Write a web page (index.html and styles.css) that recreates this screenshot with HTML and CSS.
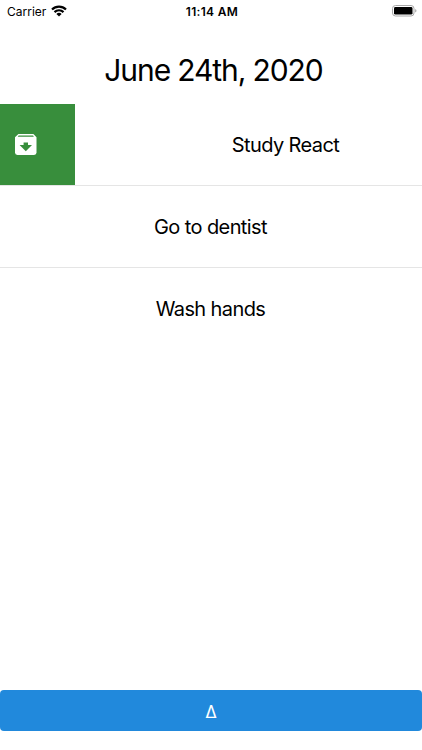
FILE: index.html
```html
<!DOCTYPE html>
<html lang="en">
<head>
    <meta charset="UTF-8">
    <title>Todo</title>
    <link rel="stylesheet" href="styles.css">
</head>
<body>
    <div class="status-bar">
        <div class="carrier">
            <span>Carrier</span>
            <svg width="16" height="12" viewBox="0 0 16 12">
                <path d="M1 4.5a10 10 0 0 1 14 0M3.5 7.1a6.4 6.4 0 0 1 9 0" fill="none" stroke="#000" stroke-width="2.2"/>
                <path d="M8 11.6L5.4 9a3.8 3.8 0 0 1 5.2 0z"/>
            </svg>
        </div>
        <div class="time">11:14 AM</div>
        <div class="battery">
            <svg width="25" height="12" viewBox="0 0 25 12">
                <rect x="0.5" y="0.5" width="21.5" height="10.5" rx="3" fill="none" stroke="#a8a8a8"/>
                <rect x="2" y="2" width="18.5" height="7.6" rx="1.4"/>
                <path d="M23.4 4a2 2 0 0 1 0 3.4z" fill="#888"/>
            </svg>
        </div>
    </div>

    <h1 class="date">June 24th, 2020</h1>

    <ul class="todos">
        <li class="todo swiped">
            <div class="archive">
                <svg width="22" height="21" viewBox="0 0 22 21">
                    <path d="M3.4 0h15L21.5 3.2V18.6a2.4 2.4 0 0 1-2.4 2.4H2.4A2.4 2.4 0 0 1 0 18.6V3.2z" fill="#fff"/>
                    <path d="M3.6 1.5h14.4l0.9 1.2H2.7zM8.6 8.4h4.4v2.6h4L10.8 17.2 4.6 11h4z" fill="#388e3c"/>
                </svg>
            </div>
            <div class="text">Study React</div>
        </li>
        <li class="todo">
            <div class="text">Go to dentist</div>
        </li>
        <li class="todo">
            <div class="text">Wash hands</div>
        </li>
    </ul>

    <button class="add-button">Δ</button>
</body>
</html>
```
FILE: styles.css
```css
* {
    box-sizing: border-box;
}
body {
    font-family: Inter, "Liberation Sans", sans-serif;
    background-color: white;
    color: black;
    display: flex;
    flex-direction: column;
    height: 100vh;
    margin: 0;
    padding-bottom: 19px;
    overflow: hidden;
}
.status-bar {
    display: grid;
    grid-template-columns: 1fr auto 1fr;
    align-items: center;
    height: 22px;
    padding: 0 5px 0 7px;
    font-size: 12px;
}
.carrier {
    display: flex;
    align-items: center;
    gap: 5px;
}
.time {
    font-size: 12px;
    font-weight: 600;
    letter-spacing: 0.3px;
}
.battery {
    display: flex;
    justify-content: flex-end;
}
.date {
    margin: 0;
    padding: 30px 0 0 5px;
    height: 82px;
    font-size: 30px;
    font-weight: 400;
    line-height: 36px;
    letter-spacing: -1.1px;
    text-align: center;
}
.todos {
    list-style: none;
    flex: 1;
    margin: 0;
    padding: 0;
}
.todo {
    display: flex;
    height: 82px;
    overflow: hidden;
    border-bottom: 1px solid #e5e5e5;
}
.todo:last-child {
    border-bottom: none;
}
.text {
    flex: 0 0 100%;
    padding-right: 1px;
    font-size: 20px;
    line-height: 82px;
    letter-spacing: -0.6px;
    text-align: center;
}
.archive {
    display: flex;
    align-items: center;
    flex: 0 0 75px;
    padding-left: 15px;
    background-color: #388e3c;
}
.add-button {
    height: 41px;
    padding: 2px 0 0;
    background-color: #2189dc;
    color: white;
    border: none;
    border-radius: 4px;
    font-family: inherit;
    font-size: 17px;
    cursor: pointer;
}
```
